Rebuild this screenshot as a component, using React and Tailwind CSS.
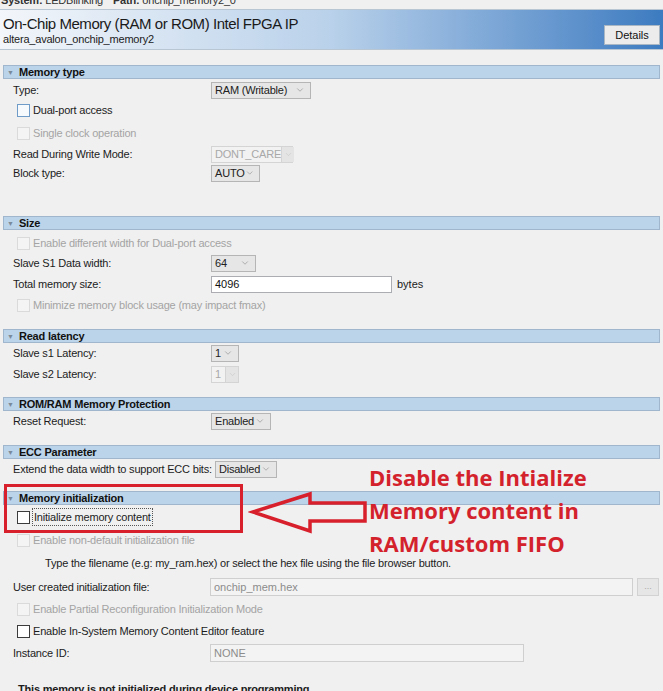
import { ChevronDown } from "lucide-react";

const SectionHeader = ({ title, className = "" }) => (
  <div
    className={`mx-[3px] h-[14px] flex items-center bg-[#bcd4ea] border border-[#9fb6cc] ${className}`}
  >
    <span className="text-[7px] text-[#7b8a99] ml-[3px] mr-[5px] leading-none">▼</span>
    <span className="text-[11px] font-bold text-[#111] tracking-[-0.2px]">{title}</span>
  </div>
);

const Select = ({ value, width, disabled }) => (
  <div
    className={`h-[17px] flex items-center justify-between pl-[3px] border text-[11px] tracking-[-0.2px] ${
      disabled
        ? "bg-[#f2f2f2] border-[#d4d4d4] text-[#a8a8a8]"
        : "bg-[#e6e6e6] border-[#b5b5b5] text-[#222] pr-[5px]"
    }`}
    style={{ width }}
  >
    <span className="whitespace-nowrap">{value}</span>
    {disabled ? (
      <span className="h-full w-[13px] shrink-0 flex items-center justify-center bg-[#e4e4e4] border-l border-[#d4d4d4]">
        <ChevronDown size={9} strokeWidth={1.5} color="#c6c6c6" />
      </span>
    ) : (
      <ChevronDown size={10} strokeWidth={1.5} color="#8a8a8a" />
    )}
  </div>
);

const Row = ({ label, children, className = "", labelW = "w-[198px]" }) => (
  <div className={`h-[18px] flex items-center pl-[13px] ${className}`}>
    <span className={`${labelW} shrink-0 whitespace-nowrap text-[11px] tracking-[-0.2px] text-[#1c1c1c]`}>
      {label}
    </span>
    {children}
  </div>
);

const Check = ({ label, disabled, tone = "dark", focus, className = "" }) => {
  const box = disabled
    ? "border-[#dadada] bg-[#f4f4f4]"
    : tone === "blue"
    ? "border-[#6f9bc8] bg-[#f7fafd]"
    : "border-[#3c3c3c] bg-white";
  return (
    <div className={`h-[18px] flex items-center pl-[17px] ${className}`}>
      <span className={`w-[13px] h-[13px] border ${box}`} />
      <span
        className={`ml-[3px] text-[11px] tracking-[-0.2px] whitespace-nowrap ${
          disabled ? "text-[#a4a4a4]" : "text-[#1c1c1c]"
        } ${focus ? "outline outline-1 outline-dotted outline-[#555] px-[1px]" : ""}`}
      >
        {label}
      </span>
    </div>
  );
};

export default function App() {
  return (
    <div className="relative w-[663px] h-[691px] overflow-hidden bg-[#f0f0f0] font-['Liberation_Sans',Arial,sans-serif]">
      {/* system bar, cut off at top */}
      <div className="h-[9px] overflow-hidden">
        <div className="-mt-[7px] pl-[1px] leading-[14px] text-[11px] tracking-[-0.2px] text-[#333]">
          <span className="font-bold">System:</span> LEDBlinking
          <span className="font-bold ml-[10px]">Path:</span> onchip_memory2_0
        </div>
      </div>

      {/* title header */}
      <div className="h-[41px] flex items-start justify-between border-y border-[#b8c6d4] bg-gradient-to-r from-[#f3f6fa] via-[#b9d1ea] to-[#3c7bc0]">
        <div className="pl-[3px] pt-[4px]">
          <div className="text-[15px] leading-[19px] tracking-[-0.45px] text-[#1a1a1a]">
            On-Chip Memory (RAM or ROM) Intel FPGA IP
          </div>
          <div className="text-[11px] leading-[13px] tracking-[-0.2px] text-[#222]">
            altera_avalon_onchip_memory2
          </div>
        </div>
        <div className="mt-[15px] mr-[3px] w-[56px] h-[20px] flex items-center justify-center bg-[#ececec] border border-[#a9b6c4] text-[11px] text-[#111]">
          Details
        </div>
      </div>

      {/* Memory type */}
      <SectionHeader title="Memory type" className="mt-[15px]" />
      <Row label="Type:" className="mt-[2px]">
        <Select value="RAM (Writable)" width={100} />
      </Row>
      <Check label="Dual-port access" tone="blue" className="mt-[2px]" />
      <Check label="Single clock operation" disabled className="mt-[5px]" />
      <Row label="Read During Write Mode:" className="mt-[3px]">
        <Select value="DONT_CARE" width={82} disabled />
      </Row>
      <Row label="Block type:" className="mt-[1px]">
        <Select value="AUTO" width={49} />
      </Row>

      {/* Size */}
      <SectionHeader title="Size" className="mt-[34px]" />
      <Check label="Enable different width for Dual-port access" disabled className="mt-[4px]" />
      <Row label="Slave S1 Data width:" className="mt-[2px]">
        <Select value="64" width={45} />
      </Row>
      <Row label="Total memory size:" className="mt-[3px]">
        <div className="w-[181px] h-[17px] flex items-center pl-[3px] bg-white border border-[#abadb3] text-[11px] text-[#111]">
          4096
        </div>
        <span className="ml-[5px] text-[11px] text-[#1c1c1c]">bytes</span>
      </Row>
      <Check label="Minimize memory block usage (may impact fmax)" disabled className="mt-[3px]" />

      {/* Read latency */}
      <SectionHeader title="Read latency" className="mt-[15px]" />
      <Row label="Slave s1 Latency:" className="mt-[1px]">
        <Select value="1" width={28} />
      </Row>
      <Row label="Slave s2 Latency:" className="mt-[3px]">
        <Select value="1" width={28} disabled />
      </Row>

      {/* ROM/RAM */}
      <SectionHeader title="ROM/RAM Memory Protection" className="mt-[14px]" />
      <Row label="Reset Request:" className="mt-[1px]">
        <Select value="Enabled" width={60} />
      </Row>

      {/* ECC */}
      <SectionHeader title="ECC Parameter" className="mt-[15px]" />
      <Row label="Extend the data width to support ECC bits:" labelW="mr-[3px]" className="mt-[1px]">
        <Select value="Disabled" width={62} />
      </Row>

      {/* Memory initialization */}
      <SectionHeader title="Memory initialization" className="mt-[13px]" />
      <Check label="Initialize memory content" focus className="mt-[3px]" />
      <Check label="Enable non-default initialization file" disabled className="mt-[5px]" />
      <div className="h-[18px] flex items-center pl-[45px] mt-[5px] text-[11px] tracking-[-0.2px] text-[#1c1c1c]">
        Type the filename (e.g: my_ram.hex) or select the hex file using the file browser button.
      </div>
      <Row label="User created initialization file:" labelW="w-[197px]" className="mt-[6px]">
        <div className="w-[423px] h-[18px] flex items-center pl-[3px] bg-[#f3f3f3] border border-[#cfcfcf] text-[11px] text-[#8c8c8c]">
          onchip_mem.hex
        </div>
        <div className="ml-[4px] w-[22px] h-[18px] flex items-center justify-center bg-[#e6e6e6] border border-[#d2d2d2] text-[9px] text-[#a8a8a8]">
          ...
        </div>
      </Row>
      <Check label="Enable Partial Reconfiguration Initialization Mode" disabled className="mt-[4px]" />
      <Check label="Enable In-System Memory Content Editor feature" className="mt-[4px]" />
      <Row label="Instance ID:" labelW="w-[197px]" className="mt-[4px]">
        <div className="w-[314px] h-[18px] flex items-center pl-[3px] bg-[#f3f3f3] border border-[#cfcfcf] text-[11px] text-[#8c8c8c]">
          NONE
        </div>
      </Row>
      <div className="h-[18px] flex items-center pl-[18px] mt-[18px] text-[11px] font-bold tracking-[-0.2px] text-[#1c1c1c]">
        This memory is not initialized during device programming.
      </div>

      {/* annotation overlay */}
      <div className="absolute left-[4px] top-[484px] w-[239px] h-[49px] border-[3px] border-[#d7202b]" />
      <svg className="absolute left-[248px] top-[490px]" width="122" height="46" viewBox="0 0 122 46">
        <path
          d="M5 22 L62 4 L62 13 L117 13 L117 31 L62 31 L62 41 Z"
          fill="none"
          stroke="#d7202b"
          strokeWidth="3.5"
          strokeLinejoin="miter"
        />
      </svg>
      <div className="absolute left-[369px] top-[461px] font-['Open_Sans',sans-serif] font-bold text-[22px] leading-[33px] text-[#d4222c]">
        <div>Disable the Intialize</div>
        <div>Memory content in</div>
        <div>RAM/custom FIFO</div>
      </div>
    </div>
  );
}
